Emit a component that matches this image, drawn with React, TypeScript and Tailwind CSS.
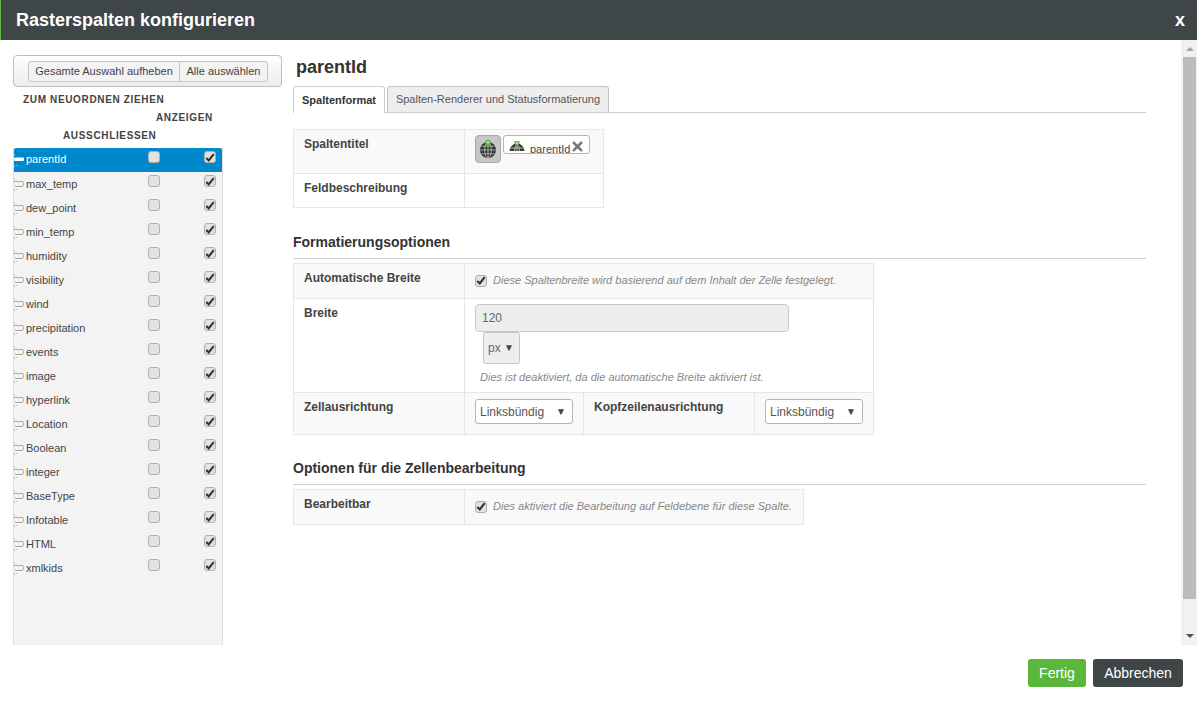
import { X } from "lucide-react";

const fields = [
  "parentId", "max_temp", "dew_point", "min_temp", "humidity", "visibility",
  "wind", "precipitation", "events", "image", "hyperlink", "Location",
  "Boolean", "integer", "BaseType", "Infotable", "HTML", "xmlkids",
];

function Box({ checked }: { checked?: boolean }) {
  return (
    <span className="flex h-3 w-3 shrink-0 items-center justify-center rounded-[3px] border border-[#aeaeae] bg-[#e2e2e2]">
      {checked && (
        <svg viewBox="0 0 12 12" className="h-[11px] w-[11px]">
          <path d="M1.5 6.5 L4.5 9.5 L10.5 2" fill="none" stroke="#333" strokeWidth="2.6" />
        </svg>
      )}
    </span>
  );
}

function Handle({ active }: { active: boolean }) {
  return (
    <svg viewBox="0 0 10 16" className="h-4 w-[10px] shrink-0">
      <path d="M0.5 2V4M0.5 13V15M2 13.5H4" stroke={active ? "#6db4dd" : "#c8c8c8"} fill="none" />
      {active ? (
        <rect x="0" y="5.5" width="10" height="3.5" rx="1" fill="#fff" />
      ) : (
        <path d="M0 5.5H8.5Q9.5 5.5 9.5 7.5T8.5 10.5H1" stroke="#a6a6a6" fill="none" />
      )}
    </svg>
  );
}

function Globe({ className }: { className: string }) {
  return (
    <svg viewBox="0 0 20 20" className={className}>
      <circle cx="10" cy="11" r="8" fill="#333" />
      <g fill="none" stroke="#b4b4b4" strokeWidth="0.9">
        <ellipse cx="10" cy="11" rx="3.4" ry="8" />
        <path d="M2 11H18M3.4 7.2H16.6M3.4 14.8H16.6M10 3V19" />
      </g>
      <path d="M10 8.5 L7.6 4.8 A2.8 2.8 0 1 1 12.4 4.8 Z" fill="#62b946" />
      <circle cx="10" cy="3.4" r="1" fill="#e6e6e6" />
    </svg>
  );
}

// clipped globe shown inside the title chip
function Dome() {
  return (
    <svg viewBox="0 0 16 10" className="h-[10px] w-4 shrink-0">
      <path d="M0.5 10A7.5 7.5 0 0 1 15.5 10Z" fill="#3a3a3a" />
      <g fill="none" stroke="#d0d0d0" strokeWidth="0.8">
        <path d="M1.5 7H14.5M5.5 10Q5.5 5 8 3M10.5 10Q10.5 5 8 3M8 5V10" />
      </g>
      <path d="M8 6L5.8 2.8A2.6 2.6 0 1 1 10.2 2.8Z" fill="#62b946" />
      <circle cx="8" cy="2" r="0.9" fill="#eee" />
    </svg>
  );
}

function Row({ label, bg, border = true, className, children }: {
  label: string;
  bg?: boolean;
  border?: boolean;
  className: string;
  children: React.ReactNode;
}) {
  return (
    <div className={`flex ${className} ${bg ? "bg-[#f9f9f9]" : "bg-white"} ${border ? "border-b border-[#e6e6e6]" : ""}`}>
      <div className="w-[171px] shrink-0 border-r border-[#e6e6e6] pl-[10px] pt-[6px] text-xs leading-[17px] font-bold text-[#444]">
        {label}
      </div>
      {children}
    </div>
  );
}

function Select() {
  return (
    <div className="flex h-[25px] w-[98px] items-center justify-between rounded-[3px] border border-[#b5b5b5] bg-white pl-1 pr-[6px] text-xs text-[#555]">
      Linksbündig
      <span className="text-[10px] text-[#444]">▼</span>
    </div>
  );
}

function SectionTitle({ children }: { children: React.ReactNode }) {
  return (
    <div className="h-[25px] border-b border-[#cfcfcf] text-sm leading-[17px] font-bold text-[#333]">
      {children}
    </div>
  );
}

export default function App() {
  return (
    <div className="flex h-[702px] w-[1197px] flex-col overflow-hidden bg-white font-['Liberation_Sans',Arial,sans-serif]">
      <div className="flex h-10 shrink-0 items-center justify-between border-l border-[#5bb73b] bg-[#3e4648] pl-[15px] pr-[12px]">
        <span className="text-lg font-bold text-white">Rasterspalten konfigurieren</span>
        <span className="text-lg font-bold text-white">x</span>
      </div>

      <div className="flex h-[605px] shrink-0">
        <div className="flex w-[293px] shrink-0 flex-col pl-[13px] pt-[15px]">
          <div className="flex h-[32px] w-[269px] shrink-0 items-center rounded-[4px] border border-[#bdbdbd] bg-gradient-to-b from-white to-[#ececec] pl-[14px]">
            <div className="flex h-[21px] items-center whitespace-nowrap rounded-[3px] border border-[#c4c4c4] bg-[#f3f3f3] text-[11px] text-[#444]">
              <span className="flex h-full w-[151px] items-center justify-center border-r border-[#c4c4c4]">Gesamte Auswahl aufheben</span>
              <span className="flex h-full w-[87px] items-center justify-center">Alle auswählen</span>
            </div>
          </div>

          <div className="mt-[4px] w-[210px] shrink-0 text-[10px] leading-[18px] font-bold tracking-[0.65px] text-[#444]">
            <div className="pl-[10px]">ZUM NEUORDNEN ZIEHEN</div>
            <div className="pl-[143px]">ANZEIGEN</div>
            <div className="pl-[50px]">AUSSCHLIESSEN</div>
          </div>

          <div className="mt-[3px] w-[210px] flex-1 border-x border-[#dedede] bg-[#f3f3f3]">
            {fields.map((name, i) => (
              <div
                key={name}
                className={`relative flex h-6 items-center text-[11px] ${i === 0 ? "rounded-t-[2px] bg-[#0088cc] text-white" : "text-[#444]"}`}
              >
                <Handle active={i === 0} />
                <span className={`ml-[2px] ${i === 0 ? "mt-[-1px]" : "mt-[1px]"}`}>{name}</span>
                <span className="absolute left-[134px] top-[3px]"><Box /></span>
                <span className="absolute left-[190px] top-[3px]"><Box checked /></span>
              </div>
            ))}
          </div>
        </div>

        <div className="w-[853px] shrink-0 pt-[16px]">
          <div className="pl-[3px] text-lg leading-[22px] font-bold text-[#333]">parentId</div>

          <div className="mt-[8px] flex h-[27px] gap-[2px] border-b border-[#cfcfcf] text-[11px]">
            <div className="z-10 flex h-[27px] w-[92px] items-center justify-center rounded-t-[3px] border border-b-0 border-[#cfcfcf] bg-white font-bold text-[#333]">
              Spaltenformat
            </div>
            <div className="flex h-[26px] w-[222px] items-center justify-center rounded-t-[3px] border border-b-0 border-[#c4c4c4] bg-[#eeeeee] text-[#555]">
              Spalten-Renderer und Statusformatierung
            </div>
          </div>

          <div className="mt-[16px] w-[311px] border border-[#e6e6e6]">
            <Row label="Spaltentitel" bg className="h-[44px]">
              <div className="flex items-start gap-[2px] pl-[10px] pt-[5px]">
                <span className="flex h-[28px] w-[26px] items-center justify-center rounded-[4px] border border-[#aaaaaa] bg-[#c6c6c6]">
                  <Globe className="h-5 w-5" />
                </span>
                <span className="flex h-[19px] w-[87px] items-center overflow-hidden rounded-[3px] border border-[#b5b5b5] bg-white pl-[5px] text-[11px] text-[#444]">
                  <span className="mt-[2px]"><Dome /></span>
                  <span className="ml-[5px] mt-[10px]">parentId</span>
                  <X className="mt-[4px] h-[15px] w-[15px] shrink-0 text-[#777]" strokeWidth={4} />
                </span>
              </div>
            </Row>
            <Row label="Feldbeschreibung" border={false} className="h-[33px]">
              <div />
            </Row>
          </div>

          <div className="mt-[26px]"><SectionTitle>Formatierungsoptionen</SectionTitle></div>

          <div className="mt-[4px] w-[581px] border border-[#e6e6e6]">
            <Row label="Automatische Breite" bg className="h-[35px]">
              <div className="flex items-center gap-[6px] pb-[1px] pl-[10px] text-[11px] italic text-[#888]">
                <Box checked />
                Diese Spaltenbreite wird basierend auf dem Inhalt der Zelle festgelegt.
              </div>
            </Row>
            <Row label="Breite" className="h-[94px]">
              <div className="pl-[10px] pt-[5px]">
                <div className="flex h-[28px] w-[314px] items-center rounded-[4px] border border-[#c8c8c8] bg-[#eeeeee] pl-[6px] text-xs text-[#666]">120</div>
                <div className="ml-[8px] flex h-[32px] w-[37px] items-center justify-between rounded-[3px] border border-[#c4c4c4] bg-[#eeeeee] pl-[4px] pr-[5px] text-xs text-[#666]">
                  px
                  <span className="text-[10px] text-[#444]">▼</span>
                </div>
                <div className="ml-[5px] mt-[7px] text-[11px] leading-[13px] italic text-[#888]">
                  Dies ist deaktiviert, da die automatische Breite aktiviert ist.
                </div>
              </div>
            </Row>
            <Row label="Zellausrichtung" bg border={false} className="h-[41px]">
              <div className="w-[119px] shrink-0 border-r border-[#e6e6e6] pl-[10px] pt-[6px]"><Select /></div>
              <div className="w-[171px] shrink-0 border-r border-[#e6e6e6] pl-[10px] pt-[6px] text-xs leading-[17px] font-bold text-[#444]">
                Kopfzeilenausrichtung
              </div>
              <div className="pl-[10px] pt-[6px]"><Select /></div>
            </Row>
          </div>

          <div className="mt-[25px]"><SectionTitle>Optionen für die Zellenbearbeitung</SectionTitle></div>

          <div className="mt-[4px] w-[511px] border border-[#e6e6e6]">
            <Row label="Bearbeitbar" bg border={false} className="h-[34px]">
              <div className="flex items-center gap-[6px] pb-[1px] pl-[10px] text-[11px] italic text-[#888]">
                <Box checked />
                Dies aktiviert die Bearbeitung auf Feldebene für diese Spalte.
              </div>
            </Row>
          </div>
        </div>

        <div className="ml-[35px] flex w-4 shrink-0 flex-col items-center bg-[#f1f1f1]">
          <div className="flex h-[17px] items-center justify-center pl-px">
            <svg viewBox="0 0 8 4" className="h-1 w-2"><path d="M4 0L8 4H0Z" fill="#a3a3a3" /></svg>
          </div>
          <div className="ml-px h-[542px] w-[13px] bg-[#bcbcbc]" />
          <div className="flex flex-1 items-end pl-px pb-[7px]">
            <svg viewBox="0 0 8 4" className="h-1 w-2"><path d="M0 0H8L4 4Z" fill="#505050" /></svg>
          </div>
        </div>
      </div>

      <div className="flex justify-end gap-[7px] pr-[14px] pt-[14px] text-sm text-white">
        <div className="flex h-[28px] w-[58px] items-center justify-center rounded-[3px] bg-[#5bb73b]">Fertig</div>
        <div className="flex h-[28px] w-[90px] items-center justify-center rounded-[3px] bg-[#3e4648]">Abbrechen</div>
      </div>
    </div>
  );
}
